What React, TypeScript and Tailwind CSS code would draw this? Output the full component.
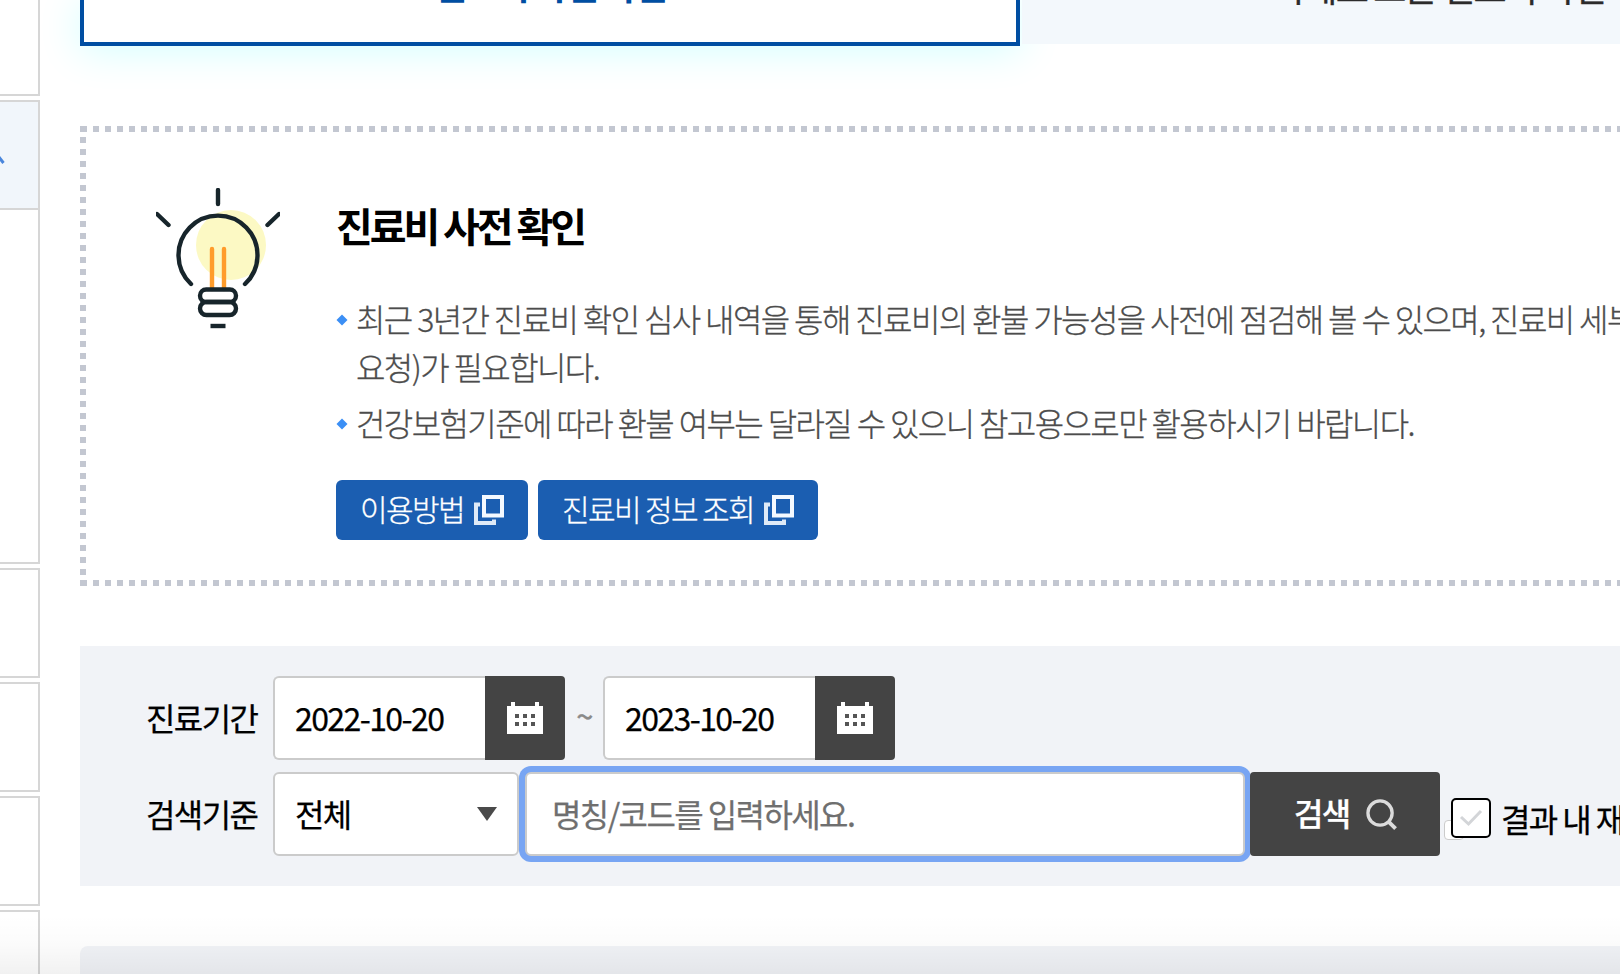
import { ReactNode } from "react";

const sideMenu = [
  { style: "h-24 mb-1", active: false },
  { style: "h-[110px] border-t-2", active: true },
  { style: "h-[354px] mb-1", active: false },
  { style: "h-[110px] border-t-2 mb-1", active: false },
  { style: "h-[110px] border-t-2 mb-1", active: false },
  { style: "h-[110px] border-t-2 mb-1", active: false },
  { style: "h-[110px] border-t-2 mb-1", active: false },
];

function SideMenu() {
  return (
    <aside className="w-10 shrink-0 flex flex-col">
      {sideMenu.map((item, index) => (
        <div
          key={index}
          className={`${item.style} shrink-0 border-r-2 border-b-2 border-[#d6d6d6] ${
            item.active ? "bg-[#f1f6fb]" : "bg-white"
          }`}
        >
          {item.active && (
            <svg className="mt-[51px]" width="6" height="12" viewBox="0 0 6 12">
              <path d="M-8 12L-2 3L3.500 10" fill="none" stroke="#4a86dc" strokeWidth="3" />
            </svg>
          )}
        </div>
      ))}
    </aside>
  );
}

function Tabs() {
  return (
    <div className="h-[46px] shrink-0 flex items-start gap-0.5">
      <div className="w-[940px] h-[46px] shrink-0 border-4 border-t-0 border-[#004ea2] bg-white shadow-[0_4px_40px_rgba(0,255,255,0.18)] flex items-end justify-center">
        <span className="mb-[32px] text-[36px] leading-[52px] font-bold tracking-[-1.8px] text-[#004ea2] whitespace-nowrap">
          진료비 사전 확인
        </span>
      </div>
      <div className="w-[834px] h-11 shrink-0 bg-[#f3f8fc] flex items-end justify-center relative">
        <span className="mb-[32px] text-[36px] leading-[52px] tracking-[-1.8px] text-[#2b2b2b] [-webkit-text-stroke:0.3px] whitespace-nowrap">
          사례로 보는 진료비 확인
        </span>
      </div>
    </div>
  );
}

function BulbIcon() {
  return (
    <svg width="124" height="142" viewBox="0 0 124 142" fill="none">
      <circle cx="75" cy="57" r="35" fill="#fcf9c4" />
      <path d="M56 61V101M68 61V101" stroke="#ff9c2b" strokeWidth="4.400" strokeLinecap="round" />
      <g stroke="#17252b" strokeWidth="4.400" strokeLinecap="round">
        <path d="M62 2V16M1 26L12.500 37M123 26L111.500 37" />
        <path d="M35 96A39.500 39.500 0 1 1 89 96" />
        <rect x="44" y="101.500" width="36" height="12.500" rx="6.200" />
        <rect x="44" y="114" width="36" height="13" rx="6.400" />
      </g>
      <path d="M54.500 138H69.500" stroke="#17252b" strokeWidth="4.400" />
    </svg>
  );
}

function PopupIcon() {
  return (
    <svg width="30" height="30" viewBox="0 0 30 30" fill="none">
      <path d="M6 9.500H2V28H20V24.500" stroke="#dfeaf7" strokeWidth="4" />
      <rect x="10" y="2" width="18" height="18.500" stroke="#f4f9ff" strokeWidth="4" />
    </svg>
  );
}

function CalendarIcon() {
  return (
    <svg width="36" height="32" viewBox="0 0 36 32">
      <path d="M0 4H4V0H8V4H28V0H32V4H36V32H0Z" fill="#fff" />
      <path
        d="M8 12h4v4h-4zM16 12h4v4h-4zM24 12h4v4h-4zM8 20h4v4h-4zM16 20h4v4h-4zM24 20h4v4h-4z"
        fill="#555"
      />
    </svg>
  );
}

function Bullet({ children }: { children: ReactNode }) {
  return (
    <li className="flex items-start">
      <svg className="w-5 h-12 shrink-0" viewBox="0 0 20 48">
        <path d="M6 20.500L11.500 26L6 31.500L0.500 26Z" fill="#3b8ff5" />
      </svg>
      <span className="whitespace-nowrap">{children}</span>
    </li>
  );
}

function PopupButton({ children, width }: { children: ReactNode; width: string }) {
  return (
    <button
      className={`${width} h-[60px] shrink-0 rounded-md bg-[#1b5eb1] pl-6 flex items-center gap-2.5 text-[30px] leading-none font-light tracking-[-1.6px] text-white [-webkit-text-stroke:0.3px] whitespace-nowrap`}
    >
      <span className="pb-1">{children}</span>
      <PopupIcon />
    </button>
  );
}

function Notice() {
  return (
    <section className="mt-20 h-[460px] shrink-0 flex flex-col">
      <div className="h-1.5 border-l border-[#c3c7d1] bg-[repeating-linear-gradient(90deg,#c3c7d1_0_6px,transparent_6px_12px)]" />
      <div className="h-[448px] flex">
        <div className="mt-[5px] w-1.5 shrink-0 bg-[repeating-linear-gradient(180deg,#c3c7d1_0_6px,transparent_6px_12px)]" />
        <div className="ml-[70px] mt-14 w-[180px] shrink-0">
          <BulbIcon />
        </div>
        <div className="shrink-0">
          <h2 className="mt-[63px] text-[40px] leading-[60px] font-bold tracking-[-3.1px] text-black">
            진료비 사전 확인
          </h2>
          <ul className="mt-[39px] flex flex-col gap-2 text-[32px] leading-[48px] font-light tracking-[-1.6px] text-[#4c4c4c] [-webkit-text-stroke:0.3px]">
            <Bullet>
              최근 3년간 진료비 확인 심사 내역을 통해 진료비의 환불 가능성을 사전에 점검해 볼 수 있으며, 진료비 세부
              <br />
              요청)가 필요합니다.
            </Bullet>
            <Bullet>건강보험기준에 따라 환불 여부는 달라질 수 있으니 참고용으로만 활용하시기 바랍니다.</Bullet>
          </ul>
          <div className="mt-[34px] flex gap-2.5">
            <PopupButton width="w-48">이용방법</PopupButton>
            <PopupButton width="w-[280px]">진료비 정보 조회</PopupButton>
          </div>
        </div>
      </div>
      <div className="h-1.5 border-l border-[#c3c7d1] bg-[repeating-linear-gradient(90deg,#c3c7d1_0_6px,transparent_6px_12px)]" />
    </section>
  );
}

function DateField({ value }: { value: string }) {
  return (
    <div className="flex shrink-0">
      <div className="w-[212px] h-[84px] rounded-l-md border-2 border-r-0 border-[#cbcbcb] bg-white pl-5 pb-0.5 flex items-center">
        {value}
      </div>
      <button className="w-20 h-[84px] rounded-r bg-[#444] flex items-center justify-center">
        <CalendarIcon />
      </button>
    </div>
  );
}

function SearchForm() {
  return (
    <section className="mt-[60px] h-60 shrink-0 bg-[#f1f3f7] pt-[30px] pl-[66px] flex flex-col gap-3 text-[32px] tracking-[-1.6px] text-black [-webkit-text-stroke:0.25px] whitespace-nowrap">
      <div className="flex items-center">
        <span className="w-[127px] shrink-0 pb-0.5">진료기간</span>
        <DateField value="2022-10-20" />
        <span className="w-[38px] pb-1.5 text-center text-[30px] font-medium text-[#8a8a8a]">~</span>
        <DateField value="2023-10-20" />
      </div>
      <div className="flex items-center">
        <span className="w-[127px] shrink-0 pb-0.5">검색기준</span>
        <div className="w-[246px] h-[84px] shrink-0 rounded-md border-2 border-[#cbcbcb] bg-white pl-5 pr-5 flex items-center justify-between">
          <span className="pb-0.5">전체</span>
          <svg width="20" height="14" viewBox="0 0 20 14">
            <path d="M0 0H20L10 14Z" fill="#4a4a4a" />
          </svg>
        </div>
        <div className="ml-1.5 w-[720px] h-[84px] shrink-0 rounded-md border-2 border-[#cbcbcb] bg-white ring-6 ring-[#78a5f3] pl-[25px] pb-0.5 flex items-center text-[#6f6f6f]">
          명칭/코드를 입력하세요.
        </div>
        <button className="ml-[5px] w-[190px] h-[84px] shrink-0 rounded bg-[#444] pl-11 flex items-center gap-4 font-medium text-white relative">
          <span className="pb-[5px]">검색</span>
          <svg width="31" height="31" viewBox="0 0 32 32" fill="none">
            <circle cx="14.500" cy="14.500" r="12.500" stroke="#dcdcdc" strokeWidth="3.400" />
            <path d="M23.500 23.500L30.500 30.500" stroke="#dcdcdc" strokeWidth="4" />
          </svg>
        </button>
        <label className="ml-1 mt-2 h-[50px] flex items-center shrink-0">
          <span className="relative w-[57px] h-10">
            <span className="absolute left-0 top-[22px] w-5 h-5 rounded border border-[#cbcbcb] bg-white" />
            <span className="absolute left-[7px] top-0 w-10 h-10 rounded-[5px] border-2 border-black bg-white flex items-center justify-center">
              <svg width="24" height="18" viewBox="0 0 24 18" fill="none">
                <path d="M2 8L9.500 15L22 2" stroke="#d3d5d8" strokeWidth="3" />
              </svg>
            </span>
          </span>
          결과 내 재검색
        </label>
      </div>
    </section>
  );
}

export default function App() {
  return (
    <div className="relative w-[1620px] h-[974px] overflow-hidden bg-white flex font-['Noto_Sans_CJK_KR',sans-serif]">
      <SideMenu />
      <main className="ml-10 w-[1540px] shrink-0 flex flex-col">
        <Tabs />
        <Notice />
        <SearchForm />
        <div className="mt-[60px] h-[100px] shrink-0 rounded-tl-lg bg-[#f1f3f7]" />
      </main>
      <div className="absolute inset-x-0 bottom-0 h-[60px] bg-linear-to-b from-transparent via-black/[0.015] to-black/[0.055]" />
    </div>
  );
}
